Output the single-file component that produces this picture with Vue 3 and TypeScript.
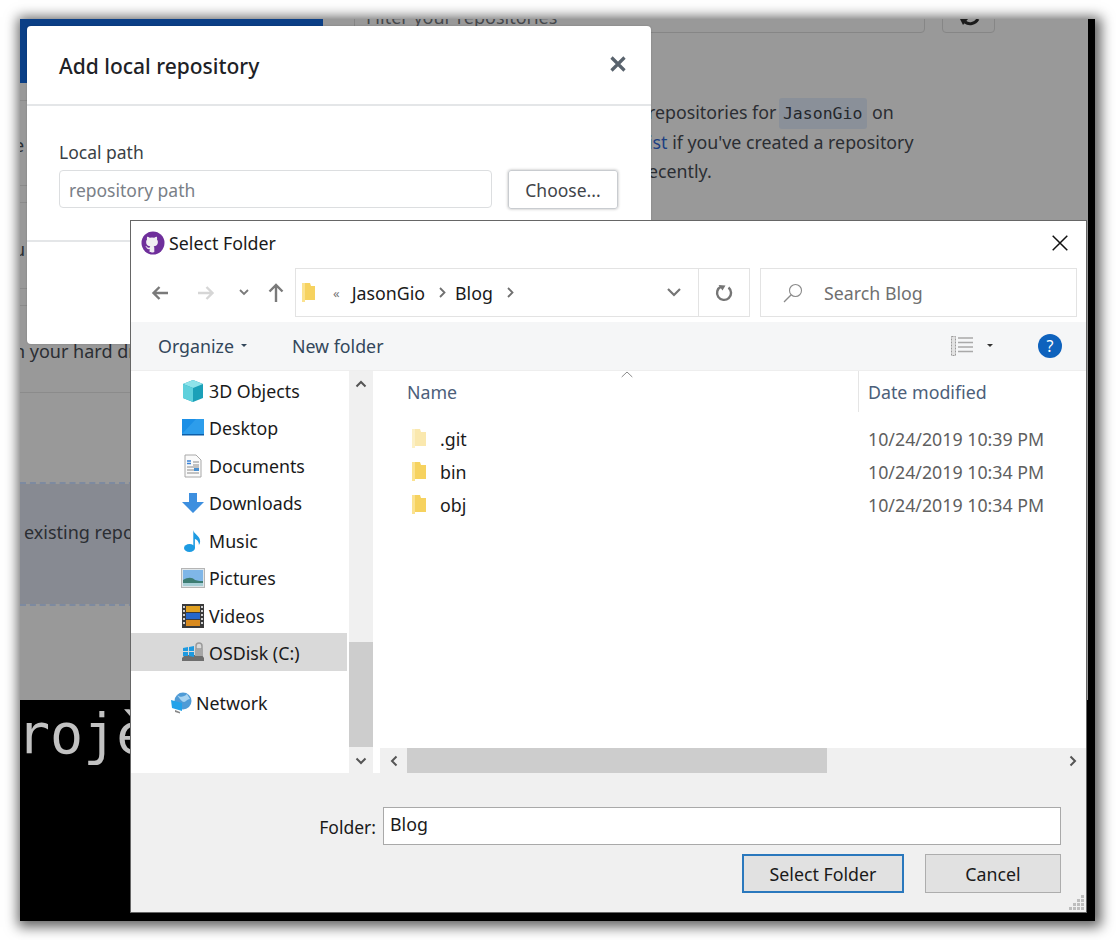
<script setup lang="ts">
const files: { name: string; date: string; faded: boolean }[] = [
  { name: '.git', date: '10/24/2019 10:39 PM', faded: true },
  { name: 'bin', date: '10/24/2019 10:34 PM', faded: false },
  { name: 'obj', date: '10/24/2019 10:34 PM', faded: false },
]
const gripDots: [number, number][] = [[12, 0], [8, 4], [12, 4], [4, 8], [8, 8], [12, 8], [0, 12], [4, 12], [8, 12], [12, 12]]
</script>

<template>
  <div class="stage">
    <div class="shot">
      <div class="page">
        <div class="upper">
          <aside class="left-col">
            <div class="blue-head"></div>
            <div class="repo-row"><span>e</span></div>
            <div class="repo-row"><span>u</span></div>
            <div class="repo-row"><span>n your hard drive</span></div>
            <div class="dropzone">existing repositories</div>
          </aside>
          <section class="right-col">
            <div class="filter-row">
              <div class="filter-input">Filter your repositories</div>
              <div class="filter-btn">
                <svg width="24" height="24" viewBox="0 0 24 24"><path d="M21 17C18 22 12 23 8 20" fill="none" stroke="#1c1c1c" stroke-width="3"/><path d="M3 17h8l-5 6z" fill="#1c1c1c"/></svg>
              </div>
            </div>
            <p class="notice">
              <span class="line">repositories for <code>JasonGio</code> on</span>
              <span class="line"><a>ist</a> if you've created a repository</span>
              <span class="line">ecently.</span>
            </p>
          </section>
        </div>
        <div class="terminal">rojè</div>
      </div>
      <div class="strip"></div>

      <div class="modal">
        <header class="modal-head">
          <h2>Add local repository</h2>
          <svg class="modal-x" width="18" height="18" viewBox="0 0 18 18"><path d="M2.500 2.500l13 13M15.500 2.500l-13 13" stroke="#59636d" stroke-width="3.200" fill="none"/></svg>
        </header>
        <div class="modal-body">
          <label>Local path</label>
          <div class="path-row">
            <div class="path-input">repository path</div>
            <div class="choose">Choose...</div>
          </div>
        </div>
      </div>

      <div class="native">
        <div class="titlebar">
          <svg class="gh" width="24" height="24" viewBox="0 0 24 24">
            <circle cx="12" cy="12" r="11.500" fill="#6f2f9b"/>
            <path d="M12 21.600c-1.300 0-2.800-.2-3.400-.5v-3c-2 .4-2.800-.5-3.300-1.800-.3-.6-.8-.9-1-1.200.7-.2 1.400.2 1.900 1 .5.8 1.400 1 2.500.5.1-.6.3-1 .6-1.300-2.300-.3-4.200-1.400-4.200-4.400 0-1 .3-1.800.9-2.500-.2-.7-.2-1.700.1-2.600.9 0 1.900.4 2.700 1a9.400 9.400 0 0 1 4.400 0c.8-.6 1.800-1 2.700-1 .3.900.3 1.900.1 2.600.6.700.9 1.500.9 2.500 0 3-1.900 4.100-4.200 4.400.4.400.6 1 .6 1.800v3.900c-.6.300-2.100.600-3.300.600z" fill="#f1eef3"/>
          </svg>
          <span class="title-text">Select Folder</span>
          <svg class="close" width="16" height="16" viewBox="0 0 16 16"><path d="M.7.7l14.600 14.600M15.300.7L.7 15.300" stroke="#111" stroke-width="1.500" fill="none"/></svg>
        </div>

        <div class="addr-row">
          <div class="nav">
            <svg class="n1" width="18" height="16" viewBox="0 0 18 16"><path d="M17 8H2.500M8.500 2L2.500 8l6 6" fill="none" stroke="#7a7a7a" stroke-width="2.400"/></svg>
            <svg class="n2" width="18" height="16" viewBox="0 0 18 16"><path d="M1 8h14.500M9.500 2l6 6-6 6" fill="none" stroke="#d6d6d6" stroke-width="2.400"/></svg>
            <svg class="n3" width="10" height="7" viewBox="0 0 10 7"><path d="M1 1l4 4 4-4" fill="none" stroke="#7a7a7a" stroke-width="1.800"/></svg>
            <svg class="n4" width="16" height="19" viewBox="0 0 16 19"><path d="M8 19V3M1.500 8.500L8 2l6.500 6.500" fill="none" stroke="#7a7a7a" stroke-width="2.400"/></svg>
          </div>
          <div class="addr">
            <svg class="crumb-folder" width="15" height="21" viewBox="0 0 15 21"><path d="M1 1h8l1 3h4v14H3l-2 2z" fill="#f6d25f"/><path d="M1 1h3v19l-3 0z" fill="#fbe28f"/></svg>
            <span class="raquo">«</span>
            <span class="crumb">JasonGio</span>
            <svg class="sep" width="7" height="11" viewBox="0 0 7 11"><path d="M1 1l4.500 4.500L1 10" fill="none" stroke="#6f6f6f" stroke-width="1.800"/></svg>
            <span class="crumb blog">Blog</span>
            <svg class="sep" width="7" height="11" viewBox="0 0 7 11"><path d="M1 1l4.500 4.500L1 10" fill="none" stroke="#6f6f6f" stroke-width="1.800"/></svg>
            <div class="spacer"></div>
            <svg class="drop" width="14" height="9" viewBox="0 0 14 9"><path d="M1 1l6 6 6-6" fill="none" stroke="#757575" stroke-width="2.200"/></svg>
            <div class="refresh">
              <svg width="18" height="18" viewBox="0 0 18 18"><path d="M6 2.600A7 7 0 1 0 13.500 3.500" fill="none" stroke="#757575" stroke-width="2.400"/><path d="M2.500 1l7 .5-3 5z" fill="#757575" transform="translate(1 0)"/></svg>
            </div>
          </div>
          <div class="search">
            <svg width="20" height="20" viewBox="0 0 20 20"><circle cx="12.500" cy="7.500" r="6" fill="none" stroke="#8a8a8a" stroke-width="1.100"/><path d="M8.200 11.800L1 19" stroke="#8a8a8a" stroke-width="1.300"/></svg>
            <span>Search Blog</span>
          </div>
        </div>

        <div class="toolbar">
          <span class="tool organize">Organize</span>
          <i class="caret"></i>
          <span class="tool newfolder">New folder</span>
          <div class="spacer"></div>
          <svg class="views" width="22" height="20" viewBox="0 0 22 20">
            <rect x="0.500" y="0.500" width="4" height="19" fill="#e2e2e2" stroke="#9a9a9a" stroke-dasharray="2 1"/>
            <path d="M7 2h15M7 6.500h15M7 11h15M7 15.500h15" stroke="#a9a9a9" stroke-width="1.300"/>
          </svg>
          <i class="caret dark"></i>
          <div class="help">?</div>
        </div>

        <div class="main">
          <nav class="tree">
            <div class="node">
              <svg width="24" height="24" viewBox="0 0 24 24"><path d="M12 1l10 4v14l-10 4-10-4V5z" fill="#1ba0b8"/><path d="M2 5l10 4 10-4-10-4z" fill="#8fe3ea"/><path d="M2 5l10 4v14L2 19z" fill="#5fd0dc"/></svg>
              <span>3D Objects</span>
            </div>
            <div class="node">
              <svg width="24" height="24" viewBox="0 0 24 24"><rect x="1" y="3" width="22" height="15" fill="#1b8fe6"/><rect x="1" y="18" width="22" height="1.500" fill="#0d5ea8"/><path d="M1 18l14-15h8v15z" fill="#3ba6ef" opacity=".6"/></svg>
              <span>Desktop</span>
            </div>
            <div class="node">
              <svg width="24" height="24" viewBox="0 0 24 24"><path d="M4 1h11l5 5v17H4z" fill="#fafafa" stroke="#a8a8a8"/><path d="M6 7h4M6 9.500h4" stroke="#3b82d6" stroke-width="1.500"/><path d="M12 8h6M12 11h6M6 13h12M6 16h12M6 19h12" stroke="#8a8a8a"/><path d="M13 14h5v3h-5z" fill="#4a90d0"/></svg>
              <span>Documents</span>
            </div>
            <div class="node">
              <svg width="24" height="24" viewBox="0 0 24 24"><path d="M8 2h8v9h7L12 22 1 11h7z" fill="#3d8fdf"/></svg>
              <span>Downloads</span>
            </div>
            <div class="node">
              <svg width="24" height="24" viewBox="0 0 24 24"><ellipse cx="8.500" cy="19" rx="5.500" ry="4" fill="#1d9be2"/><path d="M12.300 19V1c.5 4 6.500 5.500 6.800 11 .1 2-.6 3-1.200 4 .2-3-1.800-5.500-4-6V19z" fill="#1d9be2"/></svg>
              <span>Music</span>
            </div>
            <div class="node">
              <svg width="24" height="20" viewBox="0 0 24 20"><rect x="0.500" y="0.500" width="23" height="19" fill="#dfe6ea" stroke="#b5b5b5"/><rect x="2" y="2" width="20" height="16" fill="#7fb6e8"/><path d="M2 12c5-3 9-3 12 0 3 1 6 1 8 1v5H2z" fill="#3d7d73"/><path d="M2 15h20v3H2z" fill="#a7cfd6"/></svg>
              <span>Pictures</span>
            </div>
            <div class="node">
              <svg width="22" height="24" viewBox="0 0 22 24"><rect width="22" height="24" fill="#3a3a3a"/><path d="M2 2v20M20 2v20" stroke="#d0d0d0" stroke-width="2" stroke-dasharray="2 2"/><rect x="4" y="2" width="14" height="6" fill="#e0a020"/><rect x="4" y="9" width="14" height="6" fill="#2767c9"/><rect x="4" y="16" width="14" height="6" fill="#d98a1e"/></svg>
              <span>Videos</span>
            </div>
            <div class="node selected">
              <svg width="24" height="24" viewBox="0 0 24 24"><path d="M1 17l3-3h17l2 3v3H1z" fill="#6e6e6e"/><path d="M2 7l5-1v4H2zM8 6l5-1v5H8zM2 11h5v4H2zM8 11h5v5l-5-1z" fill="#1e9ae0"/><path d="M15 5a3 3 0 0 1 6 0v3h-6z" fill="none" stroke="#9a9a9a" stroke-width="1.500"/><rect x="14" y="8" width="8" height="7" fill="#a6a6a6"/></svg>
              <span>OSDisk (C:)</span>
            </div>
            <div class="node network">
              <svg width="22" height="22" viewBox="0 0 22 22"><circle cx="13" cy="9" r="8.500" fill="#4f9bd6"/><path d="M7 3c3 3 7 2 10-1l3 5c-3 0-4 3-6 3s-4-3-7-7z" fill="#a8d4f2"/><path d="M1 8l11 3v8L2 16z" fill="#22a2ea"/><path d="M5 18l5 2v1.500l-5-1.500z" fill="#888"/></svg>
              <span>Network</span>
            </div>
          </nav>
          <div class="vscroll">
            <div class="sbtn">
              <svg width="12" height="8" viewBox="0 0 12 8"><path d="M1.500 6.500L6 2l4.500 4.500" fill="none" stroke="#555" stroke-width="2"/></svg>
            </div>
            <div class="vtrack"><div class="vthumb"></div></div>
            <div class="sbtn">
              <svg width="12" height="8" viewBox="0 0 12 8"><path d="M1.500 1.500L6 6l4.500-4.500" fill="none" stroke="#555" stroke-width="2"/></svg>
            </div>
          </div>
          <div class="pane">
            <div class="list">
              <div class="cols">
                <div class="col-name">
                  Name
                  <svg class="sort" width="12" height="7" viewBox="0 0 12 7"><path d="M.7 6L6 1l5.300 5" fill="none" stroke="#8a8a8a" stroke-width="1"/></svg>
                </div>
                <div class="col-date">Date modified</div>
              </div>
              <div class="files">
                <div v-for="f in files" :key="f.name" class="file">
                  <div class="fname" :class="{ faded: f.faded }">
                    <svg width="16" height="21" viewBox="0 0 16 21"><path d="M1 1h8l1 3h5v14H3l-2 2z" fill="#f6d25f"/><path d="M1 1h3v19H1z" fill="#fbe28f"/></svg>
                    <span>{{ f.name }}</span>
                  </div>
                  <div class="fdate">{{ f.date }}</div>
                </div>
              </div>
            </div>
            <div class="hscroll">
              <div class="hbtn">
                <svg width="8" height="12" viewBox="0 0 8 12"><path d="M6.500 1.500L2 6l4.500 4.500" fill="none" stroke="#555" stroke-width="2"/></svg>
              </div>
              <div class="hthumb"></div>
              <div class="spacer"></div>
              <div class="hbtn">
                <svg width="8" height="12" viewBox="0 0 8 12"><path d="M1.500 1.500L6 6l-4.500 4.500" fill="none" stroke="#555" stroke-width="2"/></svg>
              </div>
            </div>
          </div>
        </div>

        <div class="footer">
          <div class="folder-row">
            <span class="folder-label">Folder:</span>
            <div class="folder-input">Blog</div>
          </div>
          <div class="btn-row">
            <div class="btn primary">Select Folder</div>
            <div class="btn cancel">Cancel</div>
          </div>
          <svg class="grip" width="15" height="15" viewBox="0 0 15 15">
            <rect v-for="(d, i) in gripDots" :key="i" :x="d[0]" :y="d[1]" width="3" height="3" fill="#bdbdbd"/>
          </svg>
        </div>
      </div>
    </div>
  </div>
</template>

<style>
html, body { margin: 0; background: #fff; }
</style>

<style scoped>
.stage {
  width: 1116px;
  height: 940px;
  padding: 19px 0 0 20px;
  box-sizing: border-box;
  overflow: hidden;
  background: #fff;
  font-family: "Noto Sans", "Open Sans", sans-serif;
}
.shot {
  position: relative;
  width: 1075px;
  height: 902px;
  display: flex;
  background: #000;
  box-shadow: 2px 2px 12px 4px rgba(0, 0, 0, .62);
}
.page {
  width: 1068px;
  display: flex;
  flex-direction: column;
  overflow: hidden;
}
.strip { flex: 1; background: #000; }
.upper {
  height: 681px;
  background: #999;
  display: flex;
  overflow: hidden;
  color: #2b2e33;
  font-size: 18px;
}
.left-col { width: 303px; flex: none; }
.blue-head { height: 64px; background: #0b3f86; }
.repo-row {
  height: 86px;
  margin-top: 16px;
  border-top: 1px solid #8b8b8b;
  border-bottom: 1px solid #8b8b8b;
  box-sizing: border-box;
  display: flex;
  align-items: center;
  white-space: nowrap;
  padding-top: 3px;
}
.repo-row:nth-child(2) { margin-top: 17px; }
.repo-row:nth-child(3) { height: 87px; padding-top: 6px; }
.repo-row:nth-child(4) { height: 88px; padding-top: 3px; }
.repo-row span { margin-left: -6px; }
.dropzone {
  height: 124px;
  margin-top: 89px;
  border-top: 2px dashed #7d8aa0;
  border-bottom: 2px dashed #7d8aa0;
  box-sizing: border-box;
  background: #878a92;
  background-clip: padding-box;
  padding: 36px 0 0 4px;
  white-space: nowrap;
}
.right-col { flex: 1; margin-left: 31px; min-width: 0; }
.filter-row { display: flex; gap: 17px; margin-top: -24px; height: 38px; }
.filter-input {
  width: 571px;
  box-sizing: border-box;
  border: 1px solid #868686;
  border-radius: 4px;
  padding: 7px 11px 0;
  color: #45484c;
  line-height: 28px;
  font-size: 18px;
}
.filter-btn {
  width: 53px;
  box-sizing: border-box;
  border: 1px solid #868686;
  border-radius: 4px;
  display: flex;
  align-items: center;
  justify-content: center;
}
.notice { margin: 65px 0 0 294px; font-size: 17.800px; white-space: nowrap; }
.line { display: block; height: 29.500px; line-height: 29.500px; }
.notice code {
  font-family: "DejaVu Sans Mono", monospace;
  font-size: 16.500px;
  background: #8a9099;
  padding: 6px 5px 6px 4px;
  margin-left: -2px;
  border-radius: 3px;
  color: #24272b;
}
.notice a { color: #1c3f82; }
.terminal {
  flex: 1;
  background: #000;
  color: #c2c2c2;
  font-family: "DejaVu Sans Mono", monospace;
  font-size: 55px;
  line-height: 68px;
  margin-left: -3px;
}
.modal {
  position: absolute;
  left: 7px;
  top: 7px;
  width: 624px;
  height: 318px;
  background: #fff;
  border-radius: 4px;
  box-shadow: 0 0 2px rgba(0, 0, 0, .2);
  color: #24292e;
}
.modal-head {
  height: 78px;
  border-bottom: 2px solid #e4e6e8;
  display: flex;
  align-items: center;
  justify-content: space-between;
  padding: 0 24px 0 32px;
}
.modal-head h2 { margin: 2px 0 0; font-size: 21px; font-weight: 500; color: #1e2226; }
.modal-x { margin-top: -2px; }
.modal-body {
  height: 136px;
  box-sizing: border-box;
  border-bottom: 2px solid #e4e6e8;
  padding: 34px 32px 0;
}
.modal-body label { display: block; font-size: 17.500px; line-height: 24px; color: #3a3f45; }
.path-row { display: flex; gap: 16px; margin-top: 6px; }
.path-input {
  width: 433px;
  height: 38px;
  box-sizing: border-box;
  border: 1px solid #dcdee0;
  border-radius: 4px;
  padding-left: 9px;
  line-height: 38px;
  font-size: 17.500px;
  color: #7a8087;
}
.choose {
  width: 110px;
  height: 39px;
  box-sizing: border-box;
  border: 1px solid #c9ccd0;
  border-radius: 3px;
  box-shadow: 0 0 3px rgba(0, 0, 0, .3);
  text-align: center;
  line-height: 38px;
  font-size: 17.500px;
  color: #3f4449;
}
.native {
  position: absolute;
  left: 110px;
  top: 201px;
  width: 957px;
  height: 693px;
  box-sizing: border-box;
  border: 1px solid #666;
  background: #fff;
  display: flex;
  flex-direction: column;
  color: #1a1a1a;
  font-size: 18px;
}
.titlebar {
  height: 47px;
  flex: none;
  box-sizing: border-box;
  display: flex;
  align-items: center;
  padding: 0 18px 3px 10px;
}
.gh { flex: none; }
.title-text { margin-left: 4px; font-size: 17.800px; }
.close { margin-left: auto; }
.addr-row {
  height: 54px;
  flex: none;
  display: flex;
  padding: 0 9px 5px 0;
  box-sizing: border-box;
}
.nav { width: 164px; flex: none; display: flex; align-items: center; }
.n1 { margin-left: 20px; }
.n2 { margin-left: 28px; }
.n3 { margin-left: 24px; }
.n4 { margin-left: 19px; }
.addr {
  width: 455px;
  flex: none;
  box-sizing: border-box;
  border: 1px solid #e3e3e3;
  display: flex;
  align-items: center;
  padding-left: 5px;
}
.crumb-folder { flex: none; }
.raquo { margin-left: 17px; font-size: 13px; color: #777; }
.crumb { margin-left: 12px; font-size: 17.800px; }
.crumb.blog { margin-left: 9px; }
.sep { margin-left: 14px; }
.spacer { flex: 1; }
.drop { margin-right: 17px; }
.refresh {
  width: 50px;
  height: 100%;
  border-left: 1px solid #e3e3e3;
  display: flex;
  align-items: center;
  justify-content: center;
}
.search {
  width: 317px;
  margin-left: 10px;
  flex: none;
  box-sizing: border-box;
  border: 1px solid #e3e3e3;
  display: flex;
  align-items: center;
  padding-left: 22px;
  gap: 21px;
  color: #707070;
  font-size: 17.800px;
}
.toolbar {
  height: 49px;
  flex: none;
  background: #f5f6f7;
  display: flex;
  align-items: center;
  border-bottom: 1px solid #eee;
  box-sizing: border-box;
  color: #33475b;
  font-size: 17.800px;
}
.organize { margin-left: 27px; }
.caret {
  width: 0;
  height: 0;
  margin: 0 0 2px 7px;
  border: 3px solid transparent;
  border-top: 3px solid #33475b;
  border-bottom: 0;
}
.caret.dark { margin: 0 0 2px 14px; border-top-color: #333; }
.newfolder { margin-left: 45px; }
.help {
  width: 24px;
  height: 24px;
  margin: 0 24px 0 45px;
  border-radius: 50%;
  background: #0e62bd;
  color: #fff;
  font-size: 16px;
  line-height: 24px;
  text-align: center;
}
.main { flex: 1; display: flex; min-height: 0; }
.tree { width: 216px; flex: none; padding-top: 1px; }
.node {
  height: 37.500px;
  display: flex;
  align-items: center;
  padding-left: 50px;
  box-sizing: border-box;
  font-size: 17.800px;
}
.node svg { width: 24px; flex: none; }
.node span { margin-left: 4px; }
.node.selected { background: #d9d9d9; margin-top: -1.500px; height: 38px; padding-top: 2px; }
.node.network { margin-top: 13.500px; padding-left: 39px; }
.node.network svg { width: 22px; }
.vscroll {
  width: 24px;
  flex: none;
  margin-left: 2px;
  background: #f0f0f0;
  display: flex;
  flex-direction: column;
}
.sbtn { height: 25px; flex: none; display: flex; align-items: center; justify-content: center; }
.vtrack { flex: 1; }
.vthumb { height: 105px; margin-top: 246px; background: #cdcdcd; }
.pane { flex: 1; margin-left: 5px; min-width: 0; display: flex; flex-direction: column; }
.list { flex: 1; min-height: 0; }
.cols { display: flex; height: 41px; color: #4c607a; font-size: 17.800px; }
.col-name { position: relative; width: 480px; flex: none; box-sizing: border-box; padding: 9px 0 0 29px; }
.sort { position: absolute; left: 243px; top: 0; }
.col-date { flex: 1; border-left: 1px solid #e5e5e5; padding: 9px 0 0 9px; }
.files { padding-top: 10px; }
.file { display: flex; height: 33px; align-items: center; }
.fname { width: 481px; flex: none; display: flex; align-items: center; padding-left: 33px; box-sizing: border-box; font-size: 17.800px; }
.fname span { margin-left: 13px; }
.fname svg { flex: none; }
.fname.faded svg { opacity: .5; }
.fdate { padding-left: 9px; color: #5f5f5f; font-size: 17.800px; white-space: nowrap; }
.hscroll {
  height: 25px;
  flex: none;
  margin-left: 2px;
  background: #f0f0f0;
  display: flex;
  align-items: stretch;
}
.hbtn { width: 27px; flex: none; display: flex; align-items: center; justify-content: center; }
.hthumb { width: 420px; flex: none; background: #cdcdcd; }
.footer {
  height: 139px;
  flex: none;
  background: #f0f0f0;
  position: relative;
  box-sizing: border-box;
  padding-top: 34px;
}
.folder-row { display: flex; align-items: center; height: 38px; }
.folder-label { width: 245px; flex: none; text-align: right; font-size: 17.500px; padding-top: 2px; }
.folder-input {
  width: 678px;
  margin-left: 7px;
  height: 38px;
  box-sizing: border-box;
  border: 1px solid #a9a9a9;
  background: #fff;
  padding: 3px 0 0 6px;
  line-height: 26px;
  font-size: 17.800px;
}
.btn-row { display: flex; margin: 9px 0 0 611px; gap: 21px; }
.btn {
  height: 39px;
  box-sizing: border-box;
  background: #e1e1e1;
  text-align: center;
  font-size: 17.800px;
}
.primary { width: 162px; border: 2px solid #2a78bd; line-height: 36px; }
.cancel { width: 136px; border: 1px solid #adadad; line-height: 38px; }
.grip { position: absolute; right: 2px; bottom: 2px; }
</style>
